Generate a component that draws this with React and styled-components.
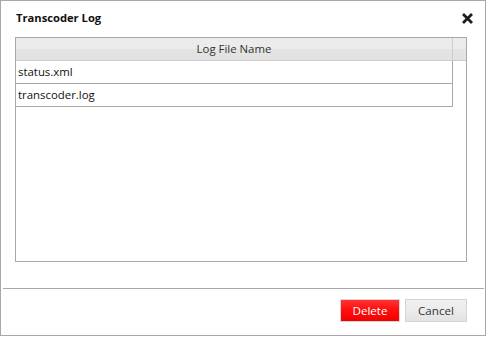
import React from "react";
import styled, { createGlobalStyle } from "styled-components";

const Global = createGlobalStyle`
  html, body { margin: 0; padding: 0; background: #fff; }
  body { font-family: "Open Sans", "Noto Sans", sans-serif; }
`;

const Dialog = styled.div`
  width: 486px;
  height: 336px;
  box-sizing: border-box;
  border: 1px solid #a8a8a8;
  background: #fff;
  display: flex;
  flex-direction: column;
`;

const Header = styled.div`
  height: 36px;
  box-sizing: border-box;
  display: flex;
  align-items: flex-start;
  justify-content: space-between;
  padding: 9px 12px 0 15px;
`;

const Title = styled.h1`
  margin: 0;
  font-size: 11.2px;
  font-weight: 700;
  color: #111;
  line-height: 16px;
`;

const CloseButton = styled.button`
  border: 0;
  background: none;
  padding: 0;
  margin-top: 3px;
  width: 11px;
  height: 11px;
  display: flex;
  cursor: pointer;
`;

const Body = styled.div`
  padding: 0 18px 0 14px;
`;

const Grid = styled.div`
  height: 225px;
  box-sizing: border-box;
  border: 1px solid #a8a8a8;
  display: flex;
  flex-direction: column;
`;

const HeaderRow = styled.div`
  display: flex;
  height: 23px;
  box-sizing: border-box;
  border-bottom: 1px solid #cdcdcd;
  background: linear-gradient(#ececec 0%, #ececec 50%, #e3e3e3 50%, #e3e3e3 100%);
`;

const HeaderCell = styled.div`
  width: 437px;
  box-sizing: border-box;
  border-right: 1px solid #cdcdcd;
  text-align: center;
  font-size: 11.4px;
  line-height: 22px;
  color: #333;
`;

const Corner = styled.div`
  flex: 1;
`;

const Row = styled.div`
  width: 437px;
  height: 23px;
  box-sizing: border-box;
  border-right: 1px solid #a8a8a8;
  border-bottom: 1px solid #a8a8a8;
  padding-left: 2px;
  font-size: 11.4px;
  line-height: 22px;
  color: #111;
`;

const Separator = styled.hr`
  margin: 26px 1px 0 2px;
  border: 0;
  border-top: 1px solid #a8a8a8;
  height: 0;
`;

const Footer = styled.div`
  display: flex;
  justify-content: flex-end;
  gap: 5px;
  padding: 10px 18px 0 0;
`;

const Button = styled.button`
  height: 23px;
  width: ${(p) => p.$w}px;
  box-sizing: border-box;
  font-family: inherit;
  font-size: 11.6px;
  padding: 0;
  cursor: pointer;
  border: 1px solid ${(p) => (p.$danger ? "#d8d8d8" : "#d4d4d4")};
  color: ${(p) => (p.$danger ? "#fff" : "#333")};
  background: ${(p) =>
    p.$danger
      ? "linear-gradient(#ff3333 0%, #ff1010 45%, #f20000 100%)"
      : "linear-gradient(#f0f0f0 0%, #ebebeb 50%, #e3e3e3 100%)"};
`;

export default function App() {
  return (
    <>
      <Global />
      <Dialog>
        <Header>
          <Title>Transcoder Log</Title>
          <CloseButton aria-label="Close">
            <svg width="11" height="11" viewBox="0 0 11 11">
              <path d="M2 2 L9 9 M9 2 L2 9" stroke="#1e1e1e" strokeWidth="2.8" strokeLinecap="square" />
            </svg>
          </CloseButton>
        </Header>
        <Body>
          <Grid>
            <HeaderRow>
              <HeaderCell>Log File Name</HeaderCell>
              <Corner />
            </HeaderRow>
            <Row>status.xml</Row>
            <Row>transcoder.log</Row>
          </Grid>
        </Body>
        <Separator />
        <Footer>
          <Button $danger $w={60}>Delete</Button>
          <Button $w={62}>Cancel</Button>
        </Footer>
      </Dialog>
    </>
  );
}
